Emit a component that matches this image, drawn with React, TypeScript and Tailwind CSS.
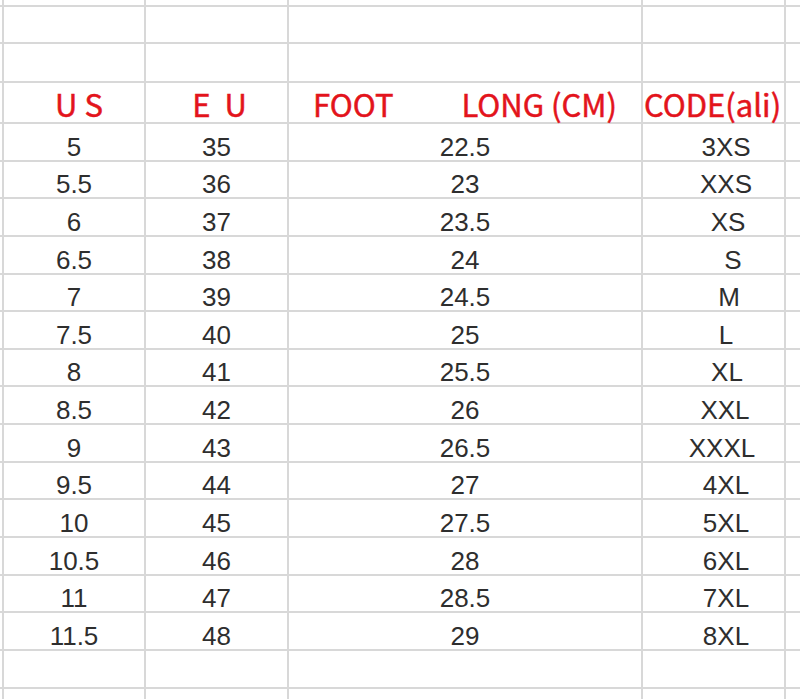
import React from 'react';

type Row = { us: string; eu: string; cm: string; code: string; shift: string };

const rows: Row[] = [
  { us: '5', eu: '35', cm: '22.5', code: '3XS', shift: 'pl-[25px]' },
  { us: '5.5', eu: '36', cm: '23', code: 'XXS', shift: 'pl-[25px]' },
  { us: '6', eu: '37', cm: '23.5', code: 'XS', shift: 'pl-[29px]' },
  { us: '6.5', eu: '38', cm: '24', code: 'S', shift: 'pl-[39px]' },
  { us: '7', eu: '39', cm: '24.5', code: 'M', shift: 'pl-[31px]' },
  { us: '7.5', eu: '40', cm: '25', code: 'L', shift: 'pl-[25px]' },
  { us: '8', eu: '41', cm: '25.5', code: 'XL', shift: 'pl-[27px]' },
  { us: '8.5', eu: '42', cm: '26', code: 'XXL', shift: 'pl-[23px]' },
  { us: '9', eu: '43', cm: '26.5', code: 'XXXL', shift: 'pl-[17px]' },
  { us: '9.5', eu: '44', cm: '27', code: '4XL', shift: 'pl-[25px]' },
  { us: '10', eu: '45', cm: '27.5', code: '5XL', shift: 'pl-[25px]' },
  { us: '10.5', eu: '46', cm: '28', code: '6XL', shift: 'pl-[25px]' },
  { us: '11', eu: '47', cm: '28.5', code: '7XL', shift: 'pl-[25px]' },
  { us: '11.5', eu: '48', cm: '29', code: '8XL', shift: 'pl-[25px]' },
];

// gridline colour of the sheet
const cell = 'border-r-2 border-b-2 border-[#d8d8d8]';
const lastCell = 'border-b-2 border-[#d8d8d8]';

const EmptyRow: React.FC<{ h: string; last?: boolean }> = ({ h, last }) => {
  const c = last ? 'border-r-2 border-[#d8d8d8]' : cell;
  const e = last ? '' : lastCell;
  return (
    <>
      <div className={`${h} ${c}`} />
      <div className={`${h} ${c}`} />
      <div className={`${h} ${c}`} />
      <div className={`${h} ${c}`} />
      <div className={`${h} ${c}`} />
      <div className={`${h} ${e}`} />
    </>
  );
};

export default function App() {
  const dataText = 'flex items-end pb-[2px] leading-[22px] text-[26px] text-[#2e2e2e]';
  const headText =
    "flex items-end pb-[4px] leading-[28px] text-[31px] font-normal [-webkit-text-stroke:0.5px_#e3141c] text-[#e3141c] whitespace-pre font-['Noto_Sans_CJK_SC','Noto_Sans',sans-serif]";

  return (
    <div className="w-[800px] h-[699px] overflow-hidden bg-white font-['Liberation_Sans',Arial,sans-serif]">
      <div className="grid grid-cols-[4px_142px_143px_354px_143px_1fr]">
        <EmptyRow h="h-[7px]" />
        <EmptyRow h="h-[37px]" />
        <EmptyRow h="h-[39px]" />

        {/* header */}
        <div className={`h-[41px] ${cell}`} />
        <div className={`h-[41px] ${cell} ${headText} justify-center pl-[10px]`}>U S</div>
        <div className={`h-[41px] ${cell} ${headText} justify-center pl-[6px]`}>E  U</div>
        <div className={`h-[41px] ${cell} ${headText} justify-between px-[24px]`}>
          <span>FOOT</span>
          <span>LONG (CM)</span>
        </div>
        <div className={`h-[41px] ${cell} ${headText} pl-[1px]`}>CODE(ali)</div>
        <div className={`h-[41px] ${lastCell}`} />

        {rows.map((r) => (
          <React.Fragment key={r.us}>
            <div className={`h-[37.64px] ${cell}`} />
            <div className={`h-[37.64px] ${cell} ${dataText} justify-center`}>{r.us}</div>
            <div className={`h-[37.64px] ${cell} ${dataText} justify-center`}>{r.eu}</div>
            <div className={`h-[37.64px] ${cell} ${dataText} justify-center`}>{r.cm}</div>
            <div className={`h-[37.64px] ${cell} ${dataText} justify-center ${r.shift}`}>{r.code}</div>
            <div className={`h-[37.64px] ${lastCell}`} />
          </React.Fragment>
        ))}

        <EmptyRow h="h-[38px]" />
        <EmptyRow h="h-[20px]" last />
      </div>
    </div>
  );
}
